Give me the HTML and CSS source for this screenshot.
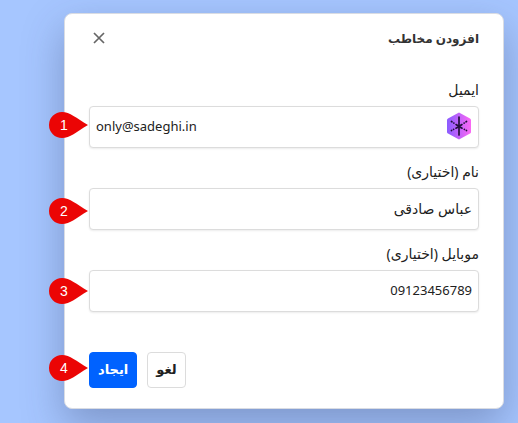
FILE: index.html
```html
<!DOCTYPE html>
<html lang="fa" dir="rtl">
<head>
  <meta charset="UTF-8">
  <meta name="viewport" content="width=device-width, initial-scale=1.0">
  <title>افزودن مخاطب</title>
  <link rel="stylesheet" href="styles.css">
</head>
<body>
  <form class="modal">
    <div class="modal-header">
      <h2>افزودن مخاطب</h2>
      <button type="button" class="close" aria-label="بستن">
        <svg width="12" height="12" viewBox="0 0 12 12">
          <path d="M1 1L11 11M11 1L1 11" stroke="#666" stroke-width="1.7" fill="none"/>
        </svg>
      </button>
    </div>

    <div class="field">
      <label for="email">ایمیل</label>
      <div class="input-wrap">
        <input type="email" id="email" name="email" class="ltr" value="only@sadeghi.in">
        <svg class="input-icon" width="24" height="28" viewBox="0 0 24 28">
          <defs>
            <linearGradient id="hex" x1="0" y1="0" x2="1" y2="0">
              <stop offset="0" stop-color="#8a5cff"/>
              <stop offset="1" stop-color="#fb68f4"/>
            </linearGradient>
          </defs>
          <path d="M12 0.500L23 6.500Q24 7 24 8V20Q24 21 23 21.500L12 27.500L1 21.500Q0 21 0 20V8Q0 7 1 6.500Z" fill="url(#hex)"/>
          <g stroke="#21103c" stroke-linecap="round" fill="none">
            <path d="M12 5V23" stroke-width="1.700"/>
            <path d="M12 14.500L4.500 9.500M12 14.500L19.500 9.500M12 14.500L4.500 18.500M12 14.500L19.500 18.500" stroke-width="1.700" stroke-dasharray="3.500 2.600 0.100 2.200"/>
          </g>
        </svg>
      </div>
    </div>

    <div class="field">
      <label for="name">نام (اختیاری)</label>
      <input type="text" id="name" name="name" class="persian" value="عباس صادقی">
    </div>

    <div class="field">
      <label for="mobile">موبایل (اختیاری)</label>
      <input type="text" id="mobile" name="mobile" value="09123456789">
    </div>

    <div class="modal-footer">
      <button type="button" class="btn">لغو</button>
      <button type="submit" class="btn btn-primary">ایجاد</button>
    </div>

    <!-- step markers -->
    <div class="marker marker-email">
      <svg width="40" height="26" viewBox="0 0 40 26"><path d="M14 0C22 0 28 6 40 13C28 20 22 26 14 26A13 13 0 0 1 14 0Z"/></svg>
      <span>1</span>
    </div>
    <div class="marker marker-name">
      <svg width="40" height="26" viewBox="0 0 40 26"><path d="M14 0C22 0 28 6 40 13C28 20 22 26 14 26A13 13 0 0 1 14 0Z"/></svg>
      <span>2</span>
    </div>
    <div class="marker marker-mobile">
      <svg width="40" height="26" viewBox="0 0 40 26"><path d="M14 0C22 0 28 6 40 13C28 20 22 26 14 26A13 13 0 0 1 14 0Z"/></svg>
      <span>3</span>
    </div>
    <div class="marker marker-submit">
      <svg width="40" height="26" viewBox="0 0 40 26"><path d="M14 0C22 0 28 6 40 13C28 20 22 26 14 26A13 13 0 0 1 14 0Z"/></svg>
      <span>4</span>
    </div>
  </form>
</body>
</html>
```

FILE: styles.css
```css
* {
  box-sizing: border-box;
}

body {
  margin: 0;
  padding: 13px 14px 14px 64px;
  min-height: 100vh;
  overflow: hidden;
  background-color: #a6c6ff;
  color: #212121;
  font-family: "Noto Sans", "DejaVu Sans", sans-serif;
  font-size: 13px;
}

.modal {
  position: relative;
  padding: 12px 24px 20px;
  background: #fff;
  border: 1px solid #d9dce3;
  border-radius: 8px;
  box-shadow: 0 16px 40px rgba(50, 60, 100, 0.35);
}

.modal-header {
  display: flex;
  justify-content: space-between;
  align-items: center;
  height: 24px;
  margin-bottom: 30px;
}

h2 {
  margin: 0;
  font-size: 12px;
  color: #333;
}

.close {
  display: flex;
  padding: 4px;
  border: none;
  background: none;
  cursor: pointer;
}

.field {
  margin-bottom: 14px;
}

label {
  display: block;
  line-height: 20px;
  margin-bottom: 6px;
  font-size: 14px;
}

input {
  display: block;
  width: 100%;
  height: 42px;
  padding: 0 6px 2px;
  border: 1px solid #dcdcdc;
  border-radius: 4px;
  background: #fff;
  box-shadow: 0 1px 2px rgba(0, 0, 0, 0.08);
  font: inherit;
  color: inherit;
}

.persian {
  font-size: 14px;
}

.ltr {
  direction: ltr;
  text-align: left;
}

.input-wrap {
  position: relative;
}

.input-icon {
  position: absolute;
  top: 6px;
  right: 8px;
}

.modal-footer {
  display: flex;
  justify-content: flex-end;
  gap: 10px;
  margin-top: 40px;
}

.btn {
  height: 36px;
  padding: 0 8px 2px;
  border: 1px solid #dcdcdc;
  border-radius: 4px;
  background: #fff;
  color: #212121;
  font: inherit;
  font-weight: bold;
  cursor: pointer;
}

.btn-primary {
  background: #0062ff;
  border-color: #0062ff;
  color: #fff;
}

.marker {
  position: absolute;
  left: -17px;
  width: 40px;
  height: 26px;
  color: #fff;
  font: 14px/26px "Liberation Sans", Arial, sans-serif;
  direction: ltr;
}

.marker svg {
  display: block;
  fill: #eb0505;
}

.marker span {
  position: absolute;
  top: 0;
  left: 0;
  width: 32px;
  text-align: center;
}

.marker-email {
  top: 98px;
}

.marker-name {
  top: 184px;
}

.marker-mobile {
  top: 264px;
}

.marker-submit {
  top: 341px;
}
```
